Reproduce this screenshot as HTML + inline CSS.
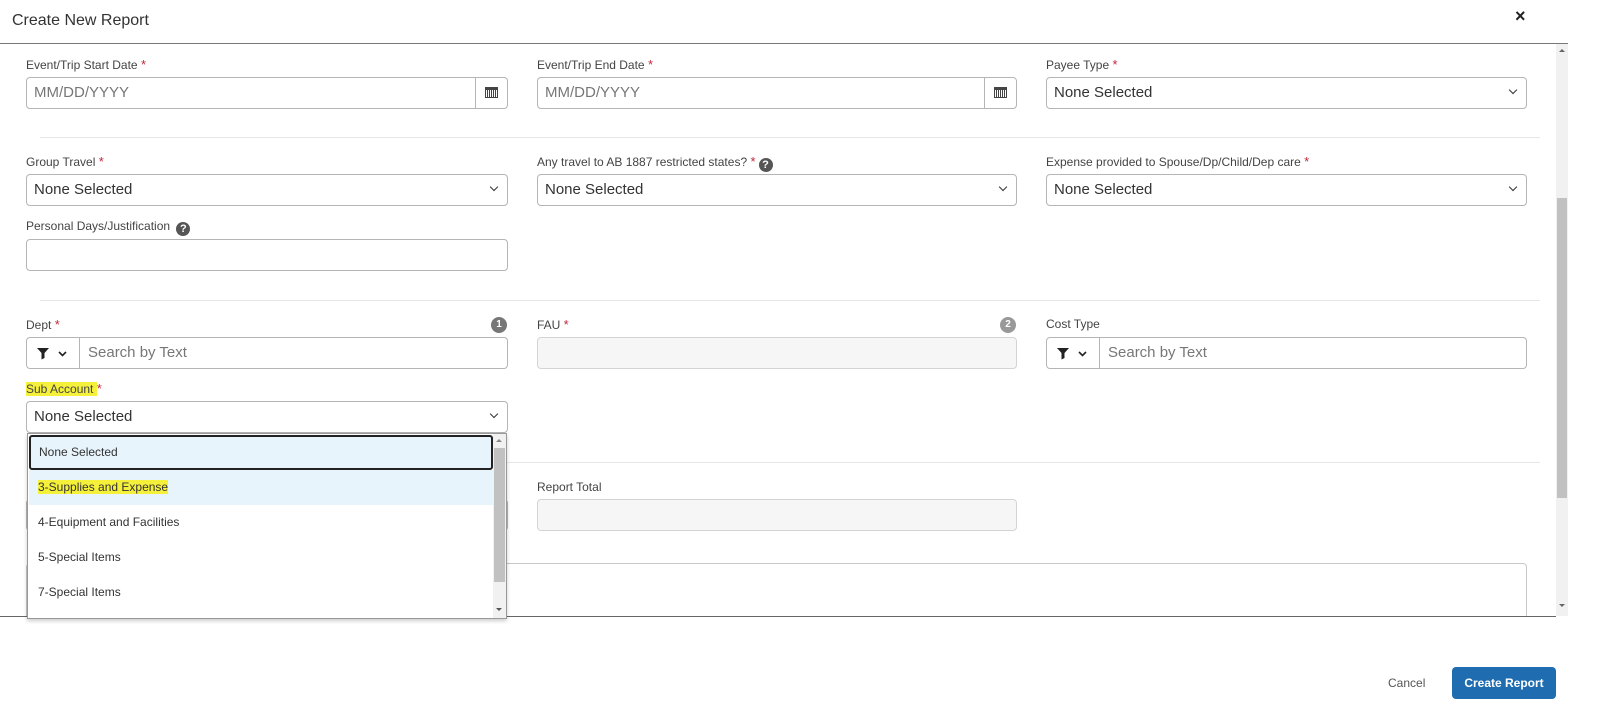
<!DOCTYPE html>
<html><head><style>
*{box-sizing:border-box;margin:0;padding:0}
body{width:1600px;height:723px;background:#fff;font-family:"Liberation Sans",Arial,sans-serif;position:relative;overflow:hidden;color:#333}
.a{position:absolute}
.lbl{position:absolute;font-size:12px;color:#444}
.lbl b{color:#c0273b;font-weight:normal;font-size:13px}
.in{position:absolute;height:32px;border:1px solid #b5b5b5;border-radius:4px;background:#fff;font-size:15px;color:#333;padding:6px 7px}
.ph{color:#777}
.dis{background:#f6f6f6;border-color:#d4d4d4}
.chev{position:absolute;right:10px;top:9px;width:6px;height:6px;border-right:1.5px solid #333;border-bottom:1.5px solid #333;transform:rotate(45deg)}
.div{position:absolute;left:40px;width:1500px;height:1px;background:#e6e6e6}
.cal{position:absolute;right:0;top:0;width:32px;height:30px;border-left:1px solid #b5b5b5}
.cal i{position:absolute;left:9px;top:9px;width:13px;height:11px;border:1px solid #444;border-top-width:3px;background:repeating-linear-gradient(90deg,#fff 0 1px,#444 1px 2px)}
.q{display:inline-block;width:14px;height:14px;border-radius:50%;background:#555;color:#fff;font-size:11px;font-weight:bold;text-align:center;line-height:14px;vertical-align:-2px;margin-left:3px}
.num{position:absolute;width:16px;height:16px;border-radius:50%;background:#777;color:#fff;font-size:10px;font-weight:bold;text-align:center;line-height:16px}
.flt{position:absolute;left:0;top:0;width:53px;height:30px;border-right:1px solid #b5b5b5}
.opt{position:absolute;left:1px;width:464px;height:35px;font-size:12px;color:#333;padding:10px 9px}
</style></head><body>
<div class="a" style="left:12px;top:12px;font-size:16px;color:#333">Create New Report</div>
<div class="a" style="left:1515px;top:6px;font-size:18px;font-weight:bold;color:#222">×</div>
<div class="a" style="left:0;top:43px;width:1568px;height:1px;background:#777"></div>

<div class="a" style="left:1556px;top:44px;width:12px;height:572px;background:#f1f1f1"></div>
<div class="a" style="left:1557px;top:198px;width:10px;height:300px;background:#c1c1c1"></div>
<div class="a" style="left:1559px;top:49px;border:3px solid transparent;border-bottom-color:#666;border-top:0"></div>
<div class="a" style="left:1559px;top:604px;border:3px solid transparent;border-top-color:#666;border-bottom:0"></div>

<div class="lbl" style="left:26px;top:57px">Event/Trip Start Date <b>*</b></div>
<div class="in" style="left:26px;top:77px;width:482px"><span class="ph">MM/DD/YYYY</span><div class="cal"><i></i></div></div>
<div class="lbl" style="left:537px;top:57px">Event/Trip End Date <b>*</b></div>
<div class="in" style="left:537px;top:77px;width:480px"><span class="ph">MM/DD/YYYY</span><div class="cal"><i></i></div></div>
<div class="lbl" style="left:1046px;top:57px">Payee Type <b>*</b></div>
<div class="in" style="left:1046px;top:77px;width:481px">None Selected<div class="chev"></div></div>

<div class="div" style="top:137px"></div>

<div class="lbl" style="left:26px;top:154px">Group Travel <b>*</b></div>
<div class="in" style="left:26px;top:174px;width:482px">None Selected<div class="chev"></div></div>
<div class="lbl" style="left:537px;top:154px">Any travel to AB 1887 restricted states? <b>*</b><span class="q">?</span></div>
<div class="in" style="left:537px;top:174px;width:480px">None Selected<div class="chev"></div></div>
<div class="lbl" style="left:1046px;top:154px">Expense provided to Spouse/Dp/Child/Dep care <b>*</b></div>
<div class="in" style="left:1046px;top:174px;width:481px">None Selected<div class="chev"></div></div>

<div class="lbl" style="left:26px;top:219px">Personal Days/Justification <span class="q">?</span></div>
<div class="in" style="left:26px;top:239px;width:482px"></div>

<div class="div" style="top:300px"></div>

<div class="lbl" style="left:26px;top:317px">Dept <b>*</b></div>
<div class="num" style="left:491px;top:317px">1</div>
<div class="in" style="left:26px;top:337px;width:482px;padding-left:61px"><div class="flt"><svg width="53" height="30"><path d="M10 10h12l-4.5 5v5l-3 1.5v-6.5z" fill="#222"/><path d="M32 14l3.5 3.5 3.5-3.5" stroke="#222" stroke-width="1.6" fill="none"/></svg></div><span class="ph">Search by Text</span></div>
<div class="lbl" style="left:537px;top:317px">FAU <b>*</b></div>
<div class="num" style="left:1000px;top:317px;background:#999">2</div>
<div class="in dis" style="left:537px;top:337px;width:480px"></div>
<div class="lbl" style="left:1046px;top:317px">Cost Type</div>
<div class="in" style="left:1046px;top:337px;width:481px;padding-left:61px"><div class="flt"><svg width="53" height="30"><path d="M10 10h12l-4.5 5v5l-3 1.5v-6.5z" fill="#222"/><path d="M32 14l3.5 3.5 3.5-3.5" stroke="#222" stroke-width="1.6" fill="none"/></svg></div><span class="ph">Search by Text</span></div>

<div class="lbl" style="left:26px;top:381px"><span style="background:#f5f03a">Sub Account </span><b>*</b></div>
<div class="in" style="left:26px;top:401px;width:482px">None Selected<div class="chev"></div></div>

<div class="div" style="top:462px"></div>
<div class="lbl" style="left:537px;top:480px">Report Total</div>
<div class="in dis" style="left:537px;top:499px;width:480px"></div>
<div class="in" style="left:26px;top:499px;width:482px"></div>
<div class="a" style="left:26px;top:563px;width:1501px;height:60px;border:1px solid #c8c8c8;border-radius:4px"></div>

<div class="a" style="left:0;top:616px;width:1556px;height:1px;background:#666"></div>
<div class="a" style="left:0;top:617px;width:1556px;height:106px;background:#fff"></div>

<div class="a" style="left:27px;top:433px;width:480px;height:186px;background:#fff;border:1px solid #999;box-shadow:0 2px 4px rgba(0,0,0,.2);z-index:5">
<div class="opt" style="top:1px;background:#e8f4fc;border:2px solid #222;border-radius:3px;padding:8px 8px">None Selected</div>
<div class="opt" style="top:36px;background:#e8f4fc"><span style="background:#f5f03a">3-Supplies and Expense</span></div>
<div class="opt" style="top:71px">4-Equipment and Facilities</div>
<div class="opt" style="top:106px">5-Special Items</div>
<div class="opt" style="top:141px">7-Special Items</div>
<div class="a" style="left:465px;top:0;width:13px;height:184px;background:#f1f1f1"></div>
<div class="a" style="left:466px;top:14px;width:11px;height:134px;background:#c1c1c1"></div>
<div class="a" style="left:468px;top:5px;border:3px solid transparent;border-bottom-color:#888;border-top:0"></div>
<div class="a" style="left:468px;top:174px;border:3px solid transparent;border-top-color:#555;border-bottom:0"></div>
</div>

<div class="a" style="left:1388px;top:676px;font-size:12px;color:#555">Cancel</div>
<div class="a" style="left:1452px;top:667px;width:104px;height:32px;background:#1f6db0;border-radius:4px;color:#fff;font-size:12px;font-weight:bold;text-align:center;line-height:32px">Create Report</div>
</body></html>
